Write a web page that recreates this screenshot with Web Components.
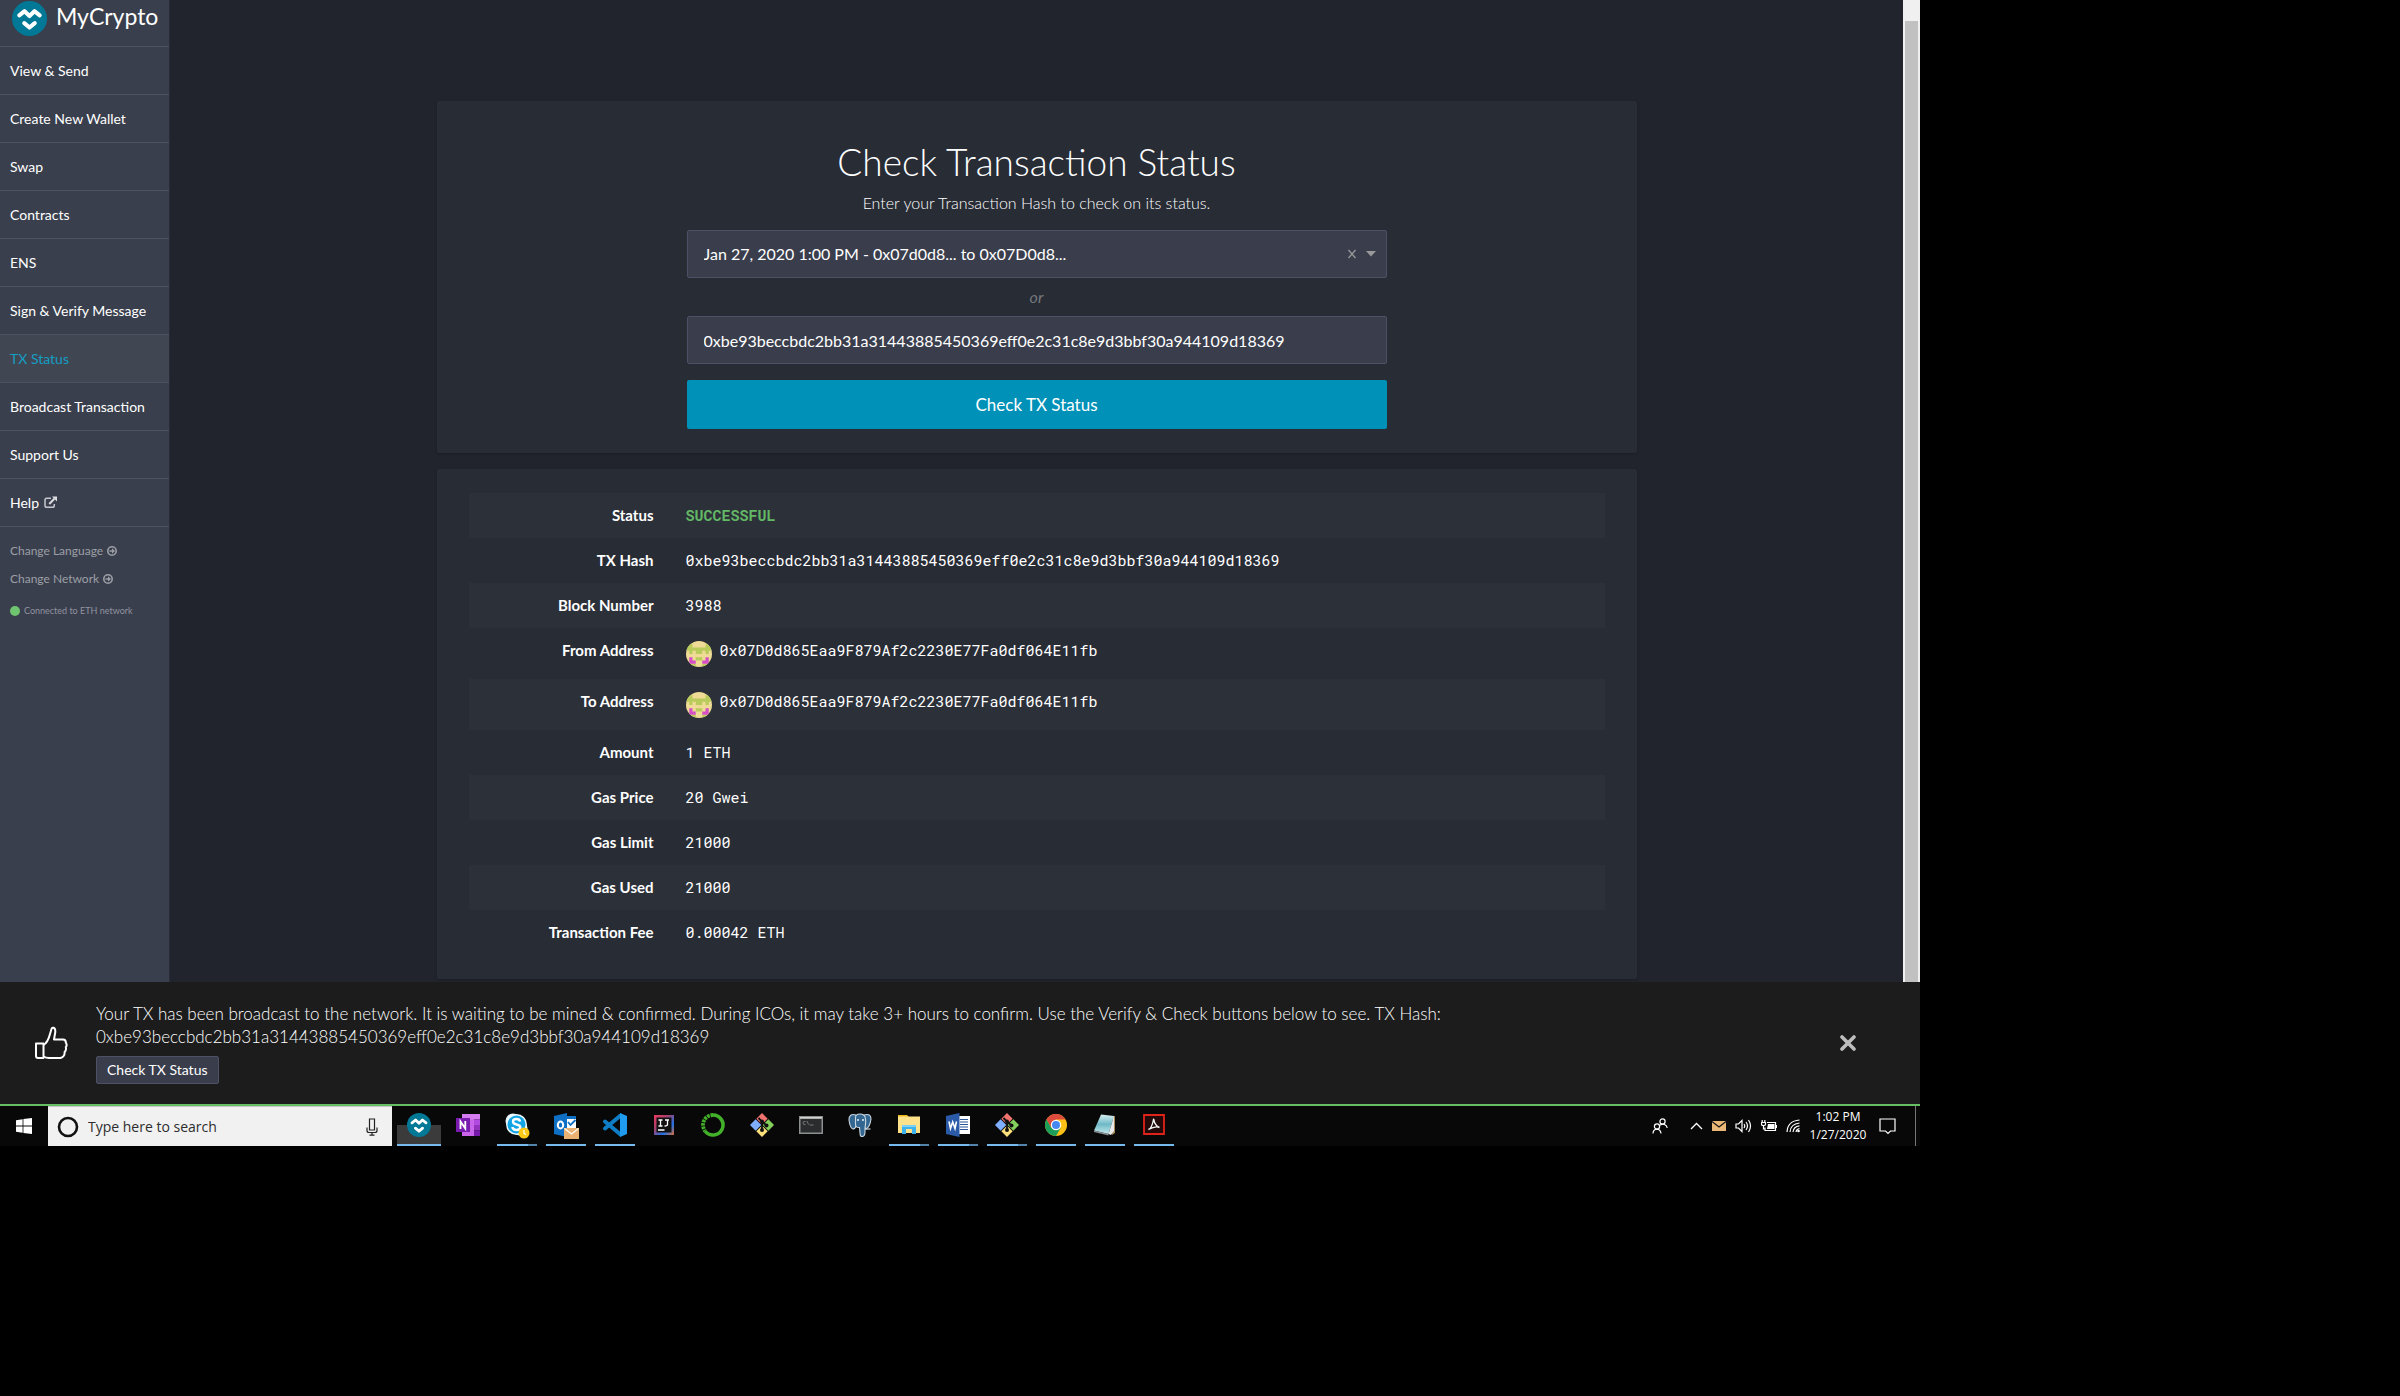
<!DOCTYPE html>
<html lang="en">
<head>
<meta charset="utf-8">
<title>MyCrypto - TX Status</title>
<style>
  html { background: #000; }
  body { margin: 0; background: #000; color: #fff; font-family: Lato, "Open Sans", sans-serif; }
</style>
</head>
<body>
<desktop-screen>
  <mc-app>
    <mc-sidebar slot="sidebar">
      <mc-nav-item>View &amp; Send</mc-nav-item>
      <mc-nav-item>Create New Wallet</mc-nav-item>
      <mc-nav-item>Swap</mc-nav-item>
      <mc-nav-item>Contracts</mc-nav-item>
      <mc-nav-item>ENS</mc-nav-item>
      <mc-nav-item>Sign &amp; Verify Message</mc-nav-item>
      <mc-nav-item active>TX Status</mc-nav-item>
      <mc-nav-item>Broadcast Transaction</mc-nav-item>
      <mc-nav-item>Support Us</mc-nav-item>
      <mc-nav-item external>Help</mc-nav-item>
    </mc-sidebar>
    <mc-card><tx-form></tx-form></mc-card>
    <mc-card flush><tx-details></tx-details></mc-card>
  </mc-app>
  <mc-notification>Your TX has been broadcast to the network. It is waiting to be mined &amp; confirmed. During ICOs, it may take 3+ hours to confirm. Use the Verify &amp; Check buttons below to see. TX Hash: 0xbe93beccbdc2bb31a31443885450369eff0e2c31c8e9d3bbf30a944109d18369</mc-notification>
  <task-bar></task-bar>
</desktop-screen>

<script>
const define = (name, html) => {
  const tpl = document.createElement('template');
  tpl.innerHTML = html;
  customElements.define(name, class extends HTMLElement {
    constructor() {
      super();
      this.attachShadow({ mode: 'open' }).append(tpl.content.cloneNode(true));
    }
  });
};

const logoArt = `
  <circle cx="12" cy="12" r="12" fill="#007896"/>
  <path d="M5 9.8 8.6 7 12 10.3 15.4 7 19 9.8" fill="none" stroke="#fff" stroke-width="2.8" stroke-linecap="round" stroke-linejoin="round"/>
  <path d="M8.4 15.2 12 18.2 15.6 15.2" fill="none" stroke="#fff" stroke-width="2.8" stroke-linecap="round" stroke-linejoin="round"/>`;

define('desktop-screen', `
<style>
  :host { display: flex; flex-direction: column; width: 80%; overflow: hidden; }
</style>
<slot></slot>`);

define('mc-app', `
<style>
  :host { display: flex; background: #21242d; }
  main { flex: 1; min-width: 0; padding: 101px 16px 3px; box-sizing: border-box; }
  .col { max-width: 1200px; margin: 0 auto; display: flex; flex-direction: column; gap: 16px; }
  .scroll { width: 17px; box-sizing: border-box; background: #f0f0f0; padding: 21px 2px 0; display: flex; }
  .thumb { flex: 1; background: #c1c1c1; }
</style>
<slot name="sidebar"></slot>
<main><div class="col"><slot></slot></div></main>
<div class="scroll"><div class="thumb"></div></div>`);

const arrowCircle = `<svg viewBox="0 0 10 10" aria-hidden="true"><circle cx="5" cy="5" r="4.200" fill="none" stroke="#9c9fa6" stroke-width="1.600"/><path d="M2.500 4.200H5V2.300L8 5 5 7.700V5.800H2.500z" fill="#9c9fa6"/></svg>`;
define('mc-sidebar', `
<style>
  :host { display: block; width: 169px; flex: none; background: #3a3f4d; border-right: 1px solid #292c36; box-sizing: content-box; }
  .brand { display: flex; align-items: center; gap: 9px; box-sizing: border-box; padding: 0 12px 9px; border-bottom: 1px solid #4e5162; height: 47px; color: #fff; text-decoration: none; font-size: 23px; line-height: 28px; }
  .brand svg { width: 35px; height: 35px; flex: none; }
  .brand span { padding-bottom: 5px; }
  ul { list-style: none; margin: 0; padding: 10px 10px 11px; font-size: 12px; line-height: 28px; }
  li a { display: flex; align-items: center; gap: 4px; color: #9c9fa6; text-decoration: none; }
  li a svg { width: 10px; height: 10px; }
  .net { display: flex; align-items: center; gap: 4px; padding: 0 10px; font-size: 9px; line-height: 14px; color: #9093a0; }
  .dot { width: 10px; height: 10px; border-radius: 50%; background: #6fc470; }
</style>
<a class="brand" href="#home"><svg viewBox="0 0 24 24" aria-hidden="true">${logoArt}</svg><span>MyCrypto</span></a>
<nav><slot></slot></nav>
<ul>
  <li><a href="#language">Change Language ${arrowCircle}</a></li>
  <li><a href="#network">Change Network ${arrowCircle}</a></li>
</ul>
<div class="net"><span class="dot"></span><span>Connected to ETH network</span></div>`);

define('mc-nav-item', `
<style>
  :host { display: block; border-bottom: 1px solid #4e5162; }
  a { display: flex; align-items: center; gap: 5px; height: 47px; padding: 0 10px; color: #fff; text-decoration: none; font-size: 14px; line-height: 20px; }
  :host([active]) a { background: #414653; color: #139fc4; }
  svg { display: none; width: 13px; height: 13px; }
  :host([external]) svg { display: block; }
</style>
<a href="#"><slot></slot><svg viewBox="0 0 13 13" aria-hidden="true"><path d="M7 2.2H2.8Q1 2.2 1 4v5.500Q1 11.300 2.800 11.300h5.700Q10.300 11.300 10.300 9.500V8" fill="none" stroke="#c6c8cd" stroke-width="1.500"/><path d="M5.300 8 10.300 2.800" stroke="#dcdde0" stroke-width="2"/><path d="M8 .5h5v5z" fill="#dcdde0"/></svg></a>`);

define('mc-card', `
<style>
  :host { display: block; background: #282c35; border-radius: 2px; box-shadow: 0 1px 3px rgba(0,0,0,.22); padding: 40px 32px 24px; }
  :host([flush]) { padding: 24px 32px 24px; }
</style>
<slot></slot>`);

define('tx-form', `
<style>
  :host { display: block; text-align: center; }
  h1 { margin: 0; font-size: 37px; line-height: 42px; font-weight: 300; }
  p { margin: 10px 0 0; font-size: 16px; line-height: 20px; font-weight: 300; }
  form { max-width: 700px; margin: 17px auto 0; display: flex; flex-direction: column; }
  .box { display: flex; align-items: center; gap: 9px; box-sizing: border-box; height: 48px; padding: 0 10px 0 0; background: #3a3e4c; border: 1px solid #4e5166; border-radius: 2px; }
  select, input { flex: 1; min-width: 0; height: 100%; box-sizing: border-box; padding: 0 16px; border: 0; outline: 0; background: none; color: #fff; font: 400 16px/20px Lato, sans-serif; appearance: none; }
  .clear { border: 0; background: none; padding: 0; width: 10px; height: 10px; display: flex; }
  .or { font-size: 16px; line-height: 38px; font-style: italic; color: #75787c; }
  .go { margin-top: 16px; height: 49px; border: 0; border-radius: 2px; background: #0091b8; color: #fff; font: 400 17px/24px Lato, sans-serif; }
</style>
<h1>Check Transaction Status</h1>
<p>Enter your Transaction Hash to check on its status.</p>
<form onsubmit="return false">
  <div class="box">
    <select aria-label="Recent transaction"><option>Jan 27, 2020 1:00 PM - 0x07d0d8... to 0x07D0d8...</option></select>
    <button class="clear" type="button" aria-label="Clear"><svg width="10" height="10" viewBox="0 0 10 10"><path d="M1.500 1 8.500 9M8.500 1 1.500 9" stroke="#999" stroke-width="1.300"/></svg></button>
    <svg width="10" height="6" viewBox="0 0 10 6" aria-hidden="true"><path d="M0 0h10L5 5.500z" fill="#999"/></svg>
  </div>
  <div class="or">or</div>
  <div class="box"><input type="text" aria-label="Transaction hash" value="0xbe93beccbdc2bb31a31443885450369eff0e2c31c8e9d3bbf30a944109d18369"></div>
  <button class="go" type="submit">Check TX Status</button>
</form>`);

const identicon = `<svg viewBox="0 0 8 8" aria-hidden="true">
  <defs><clipPath id="c"><circle cx="4" cy="4" r="4"/></clipPath></defs>
  <g clip-path="url(#c)"><path fill="#efdb96" d="M0 0h8v8H0z"/>
  <path fill="#b9cb5a" d="M0 1h2v1h4V1h2v2H7v1H6V3H5v1H3V3H2v1H1V3H0zM3 5h2v1H3zM1 7h2v1H1zM5 7h2v1H5z"/>
  <path fill="#d44fc6" d="M1 5h1v1h1v1H1zM6 5h1v2H5V6h1z"/></g></svg>`;
const addr = '0x07D0d865Eaa9F879Af2c2230E77Fa0df064E11fb';
const rows = [
  ['Status', '<strong>SUCCESSFUL</strong>'],
  ['TX Hash', '0xbe93beccbdc2bb31a31443885450369eff0e2c31c8e9d3bbf30a944109d18369'],
  ['Block Number', '3988'],
  ['From Address', `<span class="addr">${identicon}<span>${addr}</span></span>`],
  ['To Address', `<span class="addr">${identicon}<span>${addr}</span></span>`],
  ['Amount', '1 ETH'],
  ['Gas Price', '20 Gwei'],
  ['Gas Limit', '21000'],
  ['Gas Used', '21000'],
  ['Transaction Fee', '0.00042 ETH'],
];
define('tx-details', `
<style>
  :host { display: block; }
  table { width: 100%; border-collapse: collapse; font-size: 15px; line-height: 21px; }
  tr:nth-child(odd) { background: #2c3038; }
  th { width: 169px; padding: 12px 16px; text-align: right; vertical-align: top; font-weight: 700; }
  td { padding: 12px 16px; font-family: "Roboto Mono", "Liberation Mono", monospace; }
  strong { color: #62b865; font-weight: 700; }
  .addr { display: flex; gap: 8px; height: 27px; }
  .addr svg { width: 26px; height: 26px; margin-top: 1px; }
</style>
<table><tbody>${rows.map(r => `<tr><th scope="row">${r[0]}</th><td>${r[1]}</td></tr>`).join('')}</tbody></table>`);

define('mc-notification', `
<style>
  :host { display: flex; align-items: center; background: #1c1c1c; border-bottom: 2px solid #66bd63; padding: 20px 64px 20px 34px; box-sizing: border-box; }
  .icon { width: 34px; height: 34px; flex: none; }
  .body { flex: 1; padding: 0 288px 0 28px; font-size: 17px; line-height: 23px; font-weight: 300; }
  .action { display: block; margin-top: 8px; height: 28px; padding: 0 10px; background: #3a3e4c; border: 1px solid #4e5166; border-radius: 2px; color: #fff; font: 400 14px/20px Lato, sans-serif; }
  .close { border: 0; background: none; padding: 0; width: 16px; height: 16px; display: flex; }
</style>
<svg class="icon" viewBox="0 0 34 34" fill="none" stroke="#fff" stroke-width="2" stroke-linejoin="round" aria-hidden="true"><path d="M2 17.500h7.500v14.500H4Q2 32 2 30z"/><path d="M9.500 19C13 17 15 12 16 8L17.500 3Q18 1.300 19.500 1.800 21.500 2.500 21.300 6L20 13.500H29Q32 13.800 31.800 16.500 33.500 19 31.800 21.200 32.600 24 30.600 26 31 30.500 26.500 32H15Q12 32 9.500 30.500"/></svg>
<div class="body"><slot></slot><button class="action" type="button">Check TX Status</button></div>
<button class="close" type="button" aria-label="Close"><svg width="16" height="16" viewBox="0 0 16 16"><path d="M2 2 14 14M14 2 2 14" stroke="#bdbdbd" stroke-width="3.600" stroke-linecap="round"/></svg></button>`);

const gitArt = `<g transform="rotate(45 12 12)"><path fill="#7faefc" d="M3.500 12.500h8v8h-8z"/><path fill="#f0736f" d="M3.500 3.500h8v8h-8z"/><path fill="#86d05c" d="M12.500 3.500h8v8h-8z"/><path fill="#fbe07c" d="M12.500 12.500h8v8h-8z"/></g><path d="M8.500 5 12 8.500V17.500M12 8.500 16.500 12.500" fill="none" stroke="#111" stroke-width="1.800"/><circle cx="12" cy="8.500" r="1.900" fill="#111"/><circle cx="12" cy="17" r="2" fill="#111"/><circle cx="16.500" cy="12.500" r="2" fill="#111"/>`;
const apps = [
  ['MyCrypto', 'active', logoArt],
  ['OneNote', '', `<path fill="#ca64ea" d="M6 1h12v22H6z"/><path fill="#d47cf0" d="M6 1h18v5.500H6z"/><path fill="#b14be0" d="M18 6.500h6V12h-6z"/><path fill="#9332bf" d="M18 12h6v5.500h-6z"/><path fill="#7719aa" d="M18 17.500h6V23h-6z"/><path fill="#7a1bb0" d="M0 5h14v14H0z"/><path d="M4.500 16V8.500L9.300 15.500V8" fill="none" stroke="#fff" stroke-width="1.800"/>`],
  ['Skype', 'many', `<circle cx="8" cy="8" r="7.500" fill="#e9f7fd"/><circle cx="15" cy="15" r="7.500" fill="#e9f7fd"/><circle cx="11.500" cy="11.500" r="10.500" fill="#e9f7fd"/><circle cx="11.500" cy="11.500" r="9" fill="#12a5e6"/><path d="M15.200 8.500Q14.500 6 11.500 6 8 6 8 8.500 8 10.800 11.500 11.500 15.500 12.300 15.300 14.500 15 17 11.500 17 8 17 7.300 14" fill="none" stroke="#fff" stroke-width="2.400"/><circle cx="19" cy="20" r="5.500" fill="#fcc917"/><path d="M19 17v3.500l2 1" fill="none" stroke="#fff" stroke-width="1.200"/>`],
  ['Outlook', 'run', `<path fill="#0f6fc5" d="M0 3 13 0v24L0 21z"/><path fill="#fff" d="M13 6h9v9h-9z"/><path fill="none" stroke="#0f6fc5" stroke-width="1.800" d="M14 9 16.500 12 21.500 7"/><path fill="#0f6fc5" d="M13 3h9v3h-9z"/><ellipse cx="6.500" cy="12" rx="2.700" ry="3.500" fill="none" stroke="#fff" stroke-width="2"/><path fill="#e9b273" d="M10 15h15v11H10z"/><path fill="none" stroke="#fff" stroke-width="1.200" d="M10.500 15.500 17.500 21 24.500 15.500"/>`],
  ['Visual Studio Code', 'run', `<path d="M17.500 2.500 2 15.500M17.500 21.500 2 8.500" stroke="#0e7dc6" stroke-width="4" stroke-linecap="round"/><path fill="#1f9cf0" d="M17 0 24 3v18l-7 3z"/>`],
  ['IntelliJ IDEA', '', `<defs><linearGradient id="ij" x1="0" x2="1" y1="0" y2="1"><stop stop-color="#f0385f"/><stop offset=".35" stop-color="#a9406a"/><stop offset=".7" stop-color="#2072e8"/><stop offset="1" stop-color="#e06a30"/></linearGradient></defs><path fill="url(#ij)" d="M2 2h20v20H2z"/><path d="M4.500 4.500h15v15h-15z" fill="#111"/><path d="M6.500 7h4M8.500 7v6M6.500 13h4M13 7h4M15.500 7v4.500Q15.500 13 12.500 13M6 17h6.500" fill="none" stroke="#fff" stroke-width="1.300"/>`],
  ['Anaconda', '', `<path d="M12 2A10 10 0 1 1 4 18" fill="none" stroke="#43b02a" stroke-width="3.600"/><path d="M12 2A10 10 0 0 0 4 18" fill="none" stroke="#43b02a" stroke-width="3.800" stroke-dasharray="2.600 .8"/>`],
  ['Git GUI', '', gitArt],
  ['Command Prompt', '', `<path fill="#8c8f90" d="M0 3h24v18H0z"/><path fill="#d0d0d0" d="M1 4h22v1.500H1z"/><path fill="#2b2c2e" d="M1.500 6h21v13.500h-21z"/><path d="M6.500 8.500Q4 8 4 10t2.500 1.500M8 8l1.500 3.500M10.500 12h4" fill="none" stroke="#777" stroke-width="1"/>`],
  ['PostgreSQL', '', `<g fill="#336791" stroke="#c9d6e0" stroke-width="1.100"><path d="M8 2Q1 0 1 7q1 8 4 9 2 0 3-3z"/><path d="M16 2q7-2 7 4-1 8-5 10l-2-3z"/><path d="M12 1Q7 1 7.500 6v5q0 4 4 3.500L12 20q0 4 2.500 3.500Q17 23 17 19v-4q1-6 .5-9Q17 1 12 1z"/></g><path d="M17 16h5.500" stroke="#c9d6e0" stroke-width="1.200"/><circle cx="10" cy="7" r=".9" fill="#fff"/><circle cx="15" cy="7" r=".9" fill="#fff"/>`],
  ['File Explorer', 'many', `<path fill="#f2b91d" d="M1 2h9l2 2H1z"/><path fill="#fde28a" d="M1 3.500h22V20H1z"/><path fill="#3cb3ec" d="M5 12h14v9h-4v-5H9v5H5z"/><path d="M5 12h14v2H5z" fill="#7fd0f5"/>`],
  ['Word', 'many', `<path fill="#fff" d="M12 3h12v18H12z"/><path d="M14 6.500h8M14 9h8M14 11.500h8M14 14h8M14 16.500h8" stroke="#2b579a" stroke-width="1.200"/><path fill="#2b5ba8" d="M0 3 13.500 0v24L0 21z"/><path d="M3 8.500 4.500 15.500 6.700 9 9 15.500 10.500 8.500" fill="none" stroke="#fff" stroke-width="1.600"/>`],
  ['Git Bash', 'many', gitArt],
  ['Chrome', 'run', `<circle cx="12" cy="12" r="11" fill="#fbc116"/><path fill="#dd4b3e" d="M2.500 6.500A11 11 0 0 1 21.500 6.500H12L7.200 14.700z"/><path fill="#1a9e5a" d="M2.500 6.500 7.200 14.700 16.700 14.700 12 23A11 11 0 0 1 2.500 6.500z"/><circle cx="12" cy="12" r="5.200" fill="#fff"/><circle cx="12" cy="12" r="4" fill="#4688f1"/>`],
  ['Notepad', 'run', `<defs><linearGradient id="np" x1="0" x2="0" y1="0" y2="1"><stop stop-color="#d9eef2"/><stop offset=".5" stop-color="#6db9c6"/><stop offset="1" stop-color="#c6e8ec"/></linearGradient></defs><path fill="#a88a5a" d="M20 3l2 0v17l-3 2z"/><path fill="url(#np)" d="M8 1.500 21 3 15.500 21 1 17.500z"/><path fill="#e6e8ea" d="M21 3v15l-3 4-2.500-1z"/><path d="M1 17.500 15.500 21v1.500L1 19z" fill="#8b9296"/>`],
  ['Acrobat Reader', 'run', `<path fill="#23090a" stroke="#e2231a" stroke-width="1.800" d="M2 2h20v19H2z"/><path d="M6.500 16.500Q10 15 11.500 6.500 11.500 5.500 12 7q.5 5 5.500 7.500-4-2-11 2z" fill="none" stroke="#f3f3f3" stroke-width="1.400"/>`],
];
define('task-bar', `
<style>
  :host { display: flex; align-items: stretch; height: 40px; background: #080808; font-family: "Open Sans", "Noto Sans", sans-serif; color: #fff; }
  button { border: 0; background: none; padding: 0; display: flex; align-items: center; justify-content: center; color: inherit; font: inherit; }
  .start { width: 48px; }
  .search { display: flex; align-items: center; gap: 9px; width: 344px; box-sizing: border-box; padding: 0 14px 0 9px; background: #f1f1f1; border-top: 1px solid #c4c4c4; margin-right: 3px; }
  .search input { flex: 1; min-width: 0; border: 0; outline: 0; padding: 0; background: none; font: 400 14px/20px "Open Sans", sans-serif; color: #2d2d2d; }
  .search input::placeholder { color: #2d2d2d; opacity: 1; }
  .apps { display: flex; gap: 1px; flex: 1; }
  .app { width: 48px; display: grid; grid-template-rows: 38px 2px; justify-items: center; align-items: center; }
  .app svg { width: 24px; height: 24px; overflow: visible; }
  .app i { width: 40px; height: 2px; }
  .run i { background: #76b9ed; }
  .many i { background: linear-gradient(90deg, #76b9ed 31px, #5484ab 31px); }
  .active { background: linear-gradient(#3b3b3b, #3b3b3b) 50% 100% / 44px 21px no-repeat; }
  .active i { width: 44px; background: #76b9ed; }
  .tray { display: flex; align-items: center; }
  .people { margin-right: 22px; }
  .icons { display: flex; align-items: center; gap: 9px; }
  .clock { width: 74px; text-align: center; font-size: 12px; line-height: 18px; }
  .note { width: 24px; margin-right: 16px; }
  .edge { width: 4px; border-left: 1px solid #777; align-self: stretch; }
</style>
<button class="start" type="button" aria-label="Start"><svg width="16" height="16" viewBox="0 0 16 16"><path fill="#fff" d="M0 2.200 6.600 1.200V7.500H0zM7.400 1.100 16 0V7.500H7.400zM0 8.400H6.600V14.800L0 13.800zM7.400 8.400H16V16L7.400 14.900z"/></svg></button>
<label class="search"><svg width="22" height="22" viewBox="0 0 22 22" aria-hidden="true"><circle cx="11" cy="11" r="9" fill="none" stroke="#111" stroke-width="2.600"/></svg><input type="text" aria-label="Search" placeholder="Type here to search"><svg width="12" height="18" viewBox="0 0 12 18" fill="none" stroke="#222" stroke-width="1.200" aria-hidden="true"><path d="M3.500 1h5v11h-5zM1 9.500v3Q1 14.500 3 14.500H9Q11 14.500 11 12.500v-3M6 14.500V17M3.500 17.200h5"/></svg></label>
<div class="apps">${apps.map(a => `<button type="button" class="app ${a[1]}" aria-label="${a[0]}"><svg viewBox="0 0 24 24">${a[2]}</svg><i></i></button>`).join('')}</div>
<div class="tray">
  <svg class="people" width="16" height="16" viewBox="0 0 16 16" fill="none" stroke="#fff" stroke-width="1.200"><circle cx="10.500" cy="3.500" r="2.600"/><circle cx="5" cy="8.500" r="2.600"/><path d="M1 15.500Q1 11.500 5 11.200 8.500 11.500 9 15.500M8 7.200q2-1.500 4.500-.7Q15 7.500 15.200 10"/></svg>
  <div class="icons">
    <svg width="13" height="16" viewBox="0 0 13 16"><path d="M1 11 6.500 5.500 12 11" fill="none" stroke="#fff" stroke-width="1.300"/></svg>
    <svg width="14" height="16" viewBox="0 0 14 16"><path fill="#e9b878" d="M0 3h14v10H0z"/><path d="M0 3.500 7 9 14 3.500" fill="none" stroke="#111" stroke-width="1.200"/></svg>
    <svg width="17" height="16" viewBox="0 0 17 16" fill="none" stroke="#fff" stroke-width="1.200"><path d="M1 6h2.500L7 2.500v11L3.500 10H1zM9 6q1.500 2 0 4M11 4q3 4 0 8M13.500 2q4 6 0 12"/></svg>
    <svg width="16" height="16" viewBox="0 0 16 16" fill="none" stroke="#fff" stroke-width="1.200"><path d="M6 4.500h8.500v8H4V9.500"/><path d="M15.500 7v3"/><path fill="#fff" stroke="none" d="M7 6h6.500v5H6z"/><path d="M1.200 2v2M3.800 2v2M.5 4.500h4v2Q4.500 7.500 2.500 7.500T.5 6.500zM2.500 7.500V11H4"/></svg>
    <svg width="15" height="16" viewBox="0 0 15 16" fill="none" stroke="#fff" stroke-width="1.200"><path d="M10 14Q10.500 11 13.500 10.500M7 14Q7.500 8.500 13.500 7.800M4 14Q4.500 6 13.500 5M1 14Q1.500 3 13.500 2"/><circle cx="12.500" cy="13" r="1.300" fill="#fff" stroke="none"/></svg>
  </div>
  <div class="clock"><div>1:02 PM</div><div>1/27/2020</div></div>
  <button class="note" type="button" aria-label="Notifications"><svg width="17" height="18" viewBox="0 0 17 18"><path d="M1 2h15v12h-4.500L9 16.500 6.500 14H1z" fill="none" stroke="#fff" stroke-width="1.200"/></svg></button>
  <div class="edge"></div>
</div>`);
</script>
</body>
</html>
